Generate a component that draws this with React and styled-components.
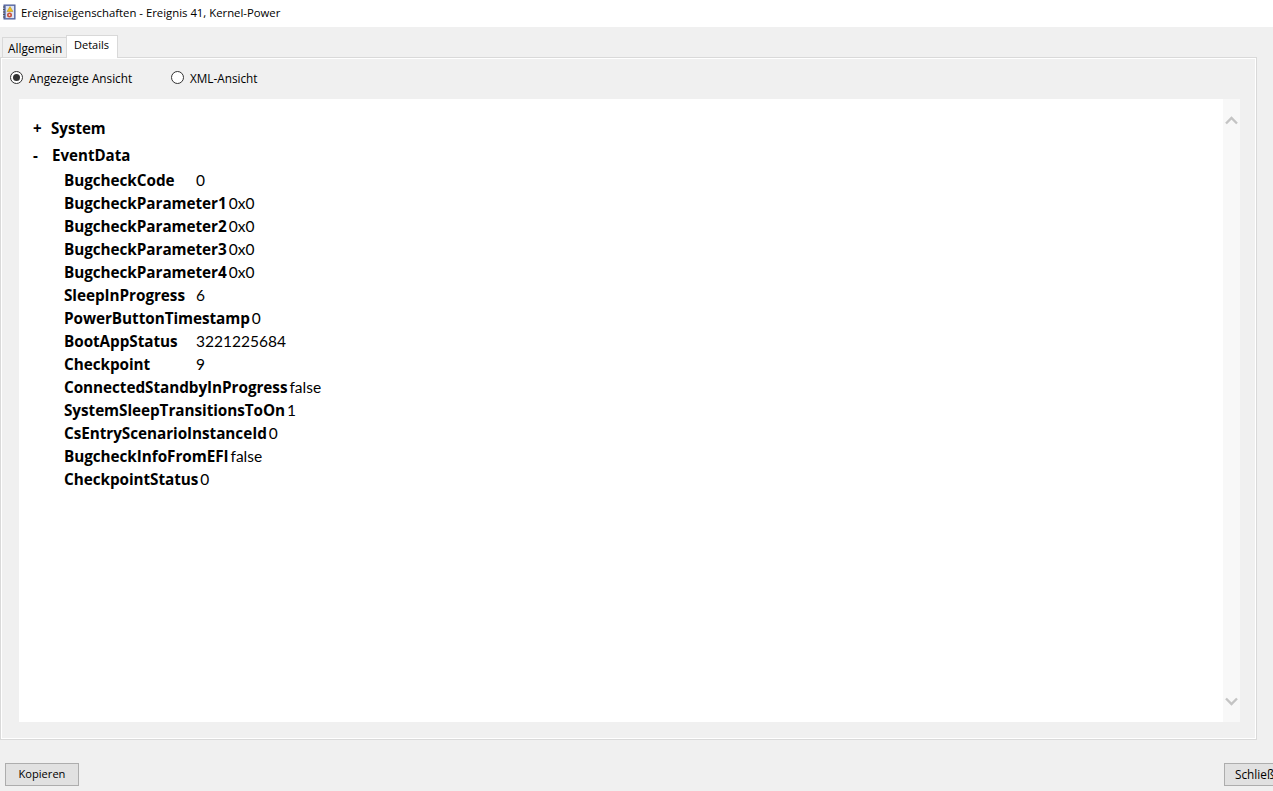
import React from "react";
import styled, { createGlobalStyle } from "styled-components";

const GlobalStyle = createGlobalStyle`
  html, body {
    margin: 0;
    padding: 0;
    height: 100%;
    overflow: hidden;
    background: #f0f0f0;
  }
`;

const Window = styled.div`
  width: 1273px;
  height: 791px;
  display: flex;
  flex-direction: column;
  overflow: hidden;
  background: #f0f0f0;
  color: #000;
  font-family: "Open Sans", "Noto Sans", sans-serif;
`;

const TitleBar = styled.div`
  height: 27px;
  flex: none;
  display: flex;
  align-items: center;
  gap: 5px;
  padding: 0 0 3px 2px;
  box-sizing: border-box;
  background: #fff;
  font-size: 11.33px;
  white-space: nowrap;
`;

const TabStrip = styled.div`
  height: 30px;
  flex: none;
  display: flex;
  align-items: flex-end;
  padding-left: 2px;
`;

const Tab = styled.div`
  box-sizing: border-box;
  font-size: ${(p) => (p.$active ? "11px" : "11.8px")};
  background: ${(p) => (p.$active ? "#fff" : "#f0f0f0")};
  height: ${(p) => (p.$active ? "23px" : "20px")};
  width: ${(p) => (p.$active ? "52px" : "64px")};
  padding: ${(p) => (p.$active ? "1px 0 0 7px" : "2px 0 0 5px")};
  border: 1px solid #d9d9d9;
  border-bottom: none;
  margin-bottom: ${(p) => (p.$active ? "-1px" : "0")};
  border-right: ${(p) => (p.$active ? "1px solid #d9d9d9" : "none")};
  position: relative;
`;

const Panel = styled.div`
  width: 1257px;
  height: 683px;
  flex: none;
  box-sizing: border-box;
  border: 1px solid #d9d9d9;
  box-shadow: inset 0 0 0 1px #fff;
  padding: 2px 16px 17px 18px;
  display: flex;
  flex-direction: column;
`;

const ViewOptions = styled.div`
  height: 39px;
  flex: none;
  display: flex;
  align-items: center;
  padding-bottom: 4px;
  box-sizing: border-box;
  margin-left: -9px;
  font-size: 11.75px;
`;

const RadioOption = styled.label`
  display: flex;
  align-items: center;
  gap: 6px;
  width: ${(p) => p.$width}px;
`;

const RadioMark = styled.span`
  width: 13px;
  height: 13px;
  box-sizing: border-box;
  border: 1px solid #333;
  border-radius: 50%;
  background: #fff;
  display: flex;
  align-items: center;
  justify-content: center;

  &::after {
    content: "";
    width: 7px;
    height: 7px;
    border-radius: 50%;
    background: ${(p) => (p.$checked ? "#333" : "transparent")};
  }
`;

const Viewer = styled.div`
  flex: 1;
  min-height: 0;
  display: flex;
`;

const Content = styled.div`
  flex: 1;
  background: #fff;
  padding: 16px 0 0 14px;
  font-size: 15.1px;
  line-height: 23px;
`;

const Scrollbar = styled.div`
  width: 17px;
  flex: none;
  background: #f8f8f8;
  display: flex;
  flex-direction: column;
  justify-content: space-between;
  align-items: center;
  padding: 17px 0 16px;
  box-sizing: border-box;
`;

const Section = styled.div`
  display: flex;
  height: 27px;
  align-items: center;
  font-weight: 700;
`;

const Toggle = styled.span`
  width: ${(p) => p.$width}px;
  flex: none;
`;

const DataRows = styled.div`
  padding-left: 31px;
`;

const DataRow = styled.div`
  display: flex;
  height: 23px;
  align-items: center;
  gap: 2px;
  white-space: nowrap;
`;

const Key = styled.span`
  min-width: 130px;
  font-weight: 700;
  font-size: 15.3px;
  letter-spacing: -0.06px;
`;

const Value = styled.span`
  font-family: "Lato", "Open Sans", sans-serif;
  font-weight: 400;
  font-size: 15.5px;
`;

const Footer = styled.div`
  flex: 1;
  display: flex;
  align-items: flex-start;
  justify-content: space-between;
  padding: 23px 0 0 5px;
`;

const Button = styled.button`
  box-sizing: border-box;
  width: 74px;
  height: 23px;
  flex: none;
  padding: 0 0 2px;
  border: 1px solid #adadad;
  background: #e1e1e1;
  font-family: inherit;
  font-size: 11.1px;
  color: #000;
  white-space: nowrap;
`;

// the close button runs past the right edge of the window
const CloseButton = styled(Button)`
  text-align: left;
  padding-left: 10px;
  margin-right: -25px;
  font-size: 11.8px;
`;

const rows = [
  ["BugcheckCode", "0"],
  ["BugcheckParameter1", "0x0"],
  ["BugcheckParameter2", "0x0"],
  ["BugcheckParameter3", "0x0"],
  ["BugcheckParameter4", "0x0"],
  ["SleepInProgress", "6"],
  ["PowerButtonTimestamp", "0"],
  ["BootAppStatus", "3221225684"],
  ["Checkpoint", "9"],
  ["ConnectedStandbyInProgress", "false"],
  ["SystemSleepTransitionsToOn", "1"],
  ["CsEntryScenarioInstanceId", "0"],
  ["BugcheckInfoFromEFI", "false"],
  ["CheckpointStatus", "0"],
];

const EventLogIcon = () => (
  <svg width="14" height="16" viewBox="0 0 14 16">
    <rect x="2" y="1" width="11" height="14" fill="#7f8fc4" stroke="#4a5a96" />
    <rect x="4" y="2" width="8" height="12" fill="#dfe4f3" />
    <path d="M1 3h2M1 5.500h2M1 8h2M1 10.500h2M1 13h2" stroke="#555" />
    <path d="M8 2.500l3 5H5z" fill="#f2c21a" stroke="#a9861a" strokeWidth="0.5" />
    <circle cx="7.500" cy="11" r="2.500" fill="#c8503c" />
    <circle cx="7.500" cy="11" r="0.900" fill="#f4d8d0" />
  </svg>
);

const Chevron = ({ up }) => (
  <svg width="13" height="9" viewBox="0 0 13 9">
    <path
      d={up ? "M1 7.500L6.500 2 12 7.500" : "M1 1.500L6.500 7 12 1.500"}
      fill="none"
      stroke="#c4c4c4"
      strokeWidth="2.400"
    />
  </svg>
);

export default function App() {
  return (
    <Window>
      <GlobalStyle />
      <TitleBar>
        <EventLogIcon />
        Ereigniseigenschaften - Ereignis 41, Kernel-Power
      </TitleBar>
      <TabStrip>
        <Tab>Allgemein</Tab>
        <Tab $active>Details</Tab>
      </TabStrip>
      <Panel>
        <ViewOptions>
          <RadioOption $width={161}>
            <RadioMark $checked />
            Angezeigte Ansicht
          </RadioOption>
          <RadioOption $width={120}>
            <RadioMark />
            XML-Ansicht
          </RadioOption>
        </ViewOptions>
        <Viewer>
          <Content>
            <Section>
              <Toggle $width={18}>+</Toggle>System
            </Section>
            <Section>
              <Toggle $width={19}>-</Toggle>EventData
            </Section>
            <DataRows>
              {rows.map(([key, value]) => (
                <DataRow key={key}>
                  <Key>{key}</Key>
                  <Value>{value}</Value>
                </DataRow>
              ))}
            </DataRows>
          </Content>
          <Scrollbar>
            <Chevron up />
            <Chevron />
          </Scrollbar>
        </Viewer>
      </Panel>
      <Footer>
        <Button>Kopieren</Button>
        <CloseButton>Schließen</CloseButton>
      </Footer>
    </Window>
  );
}
